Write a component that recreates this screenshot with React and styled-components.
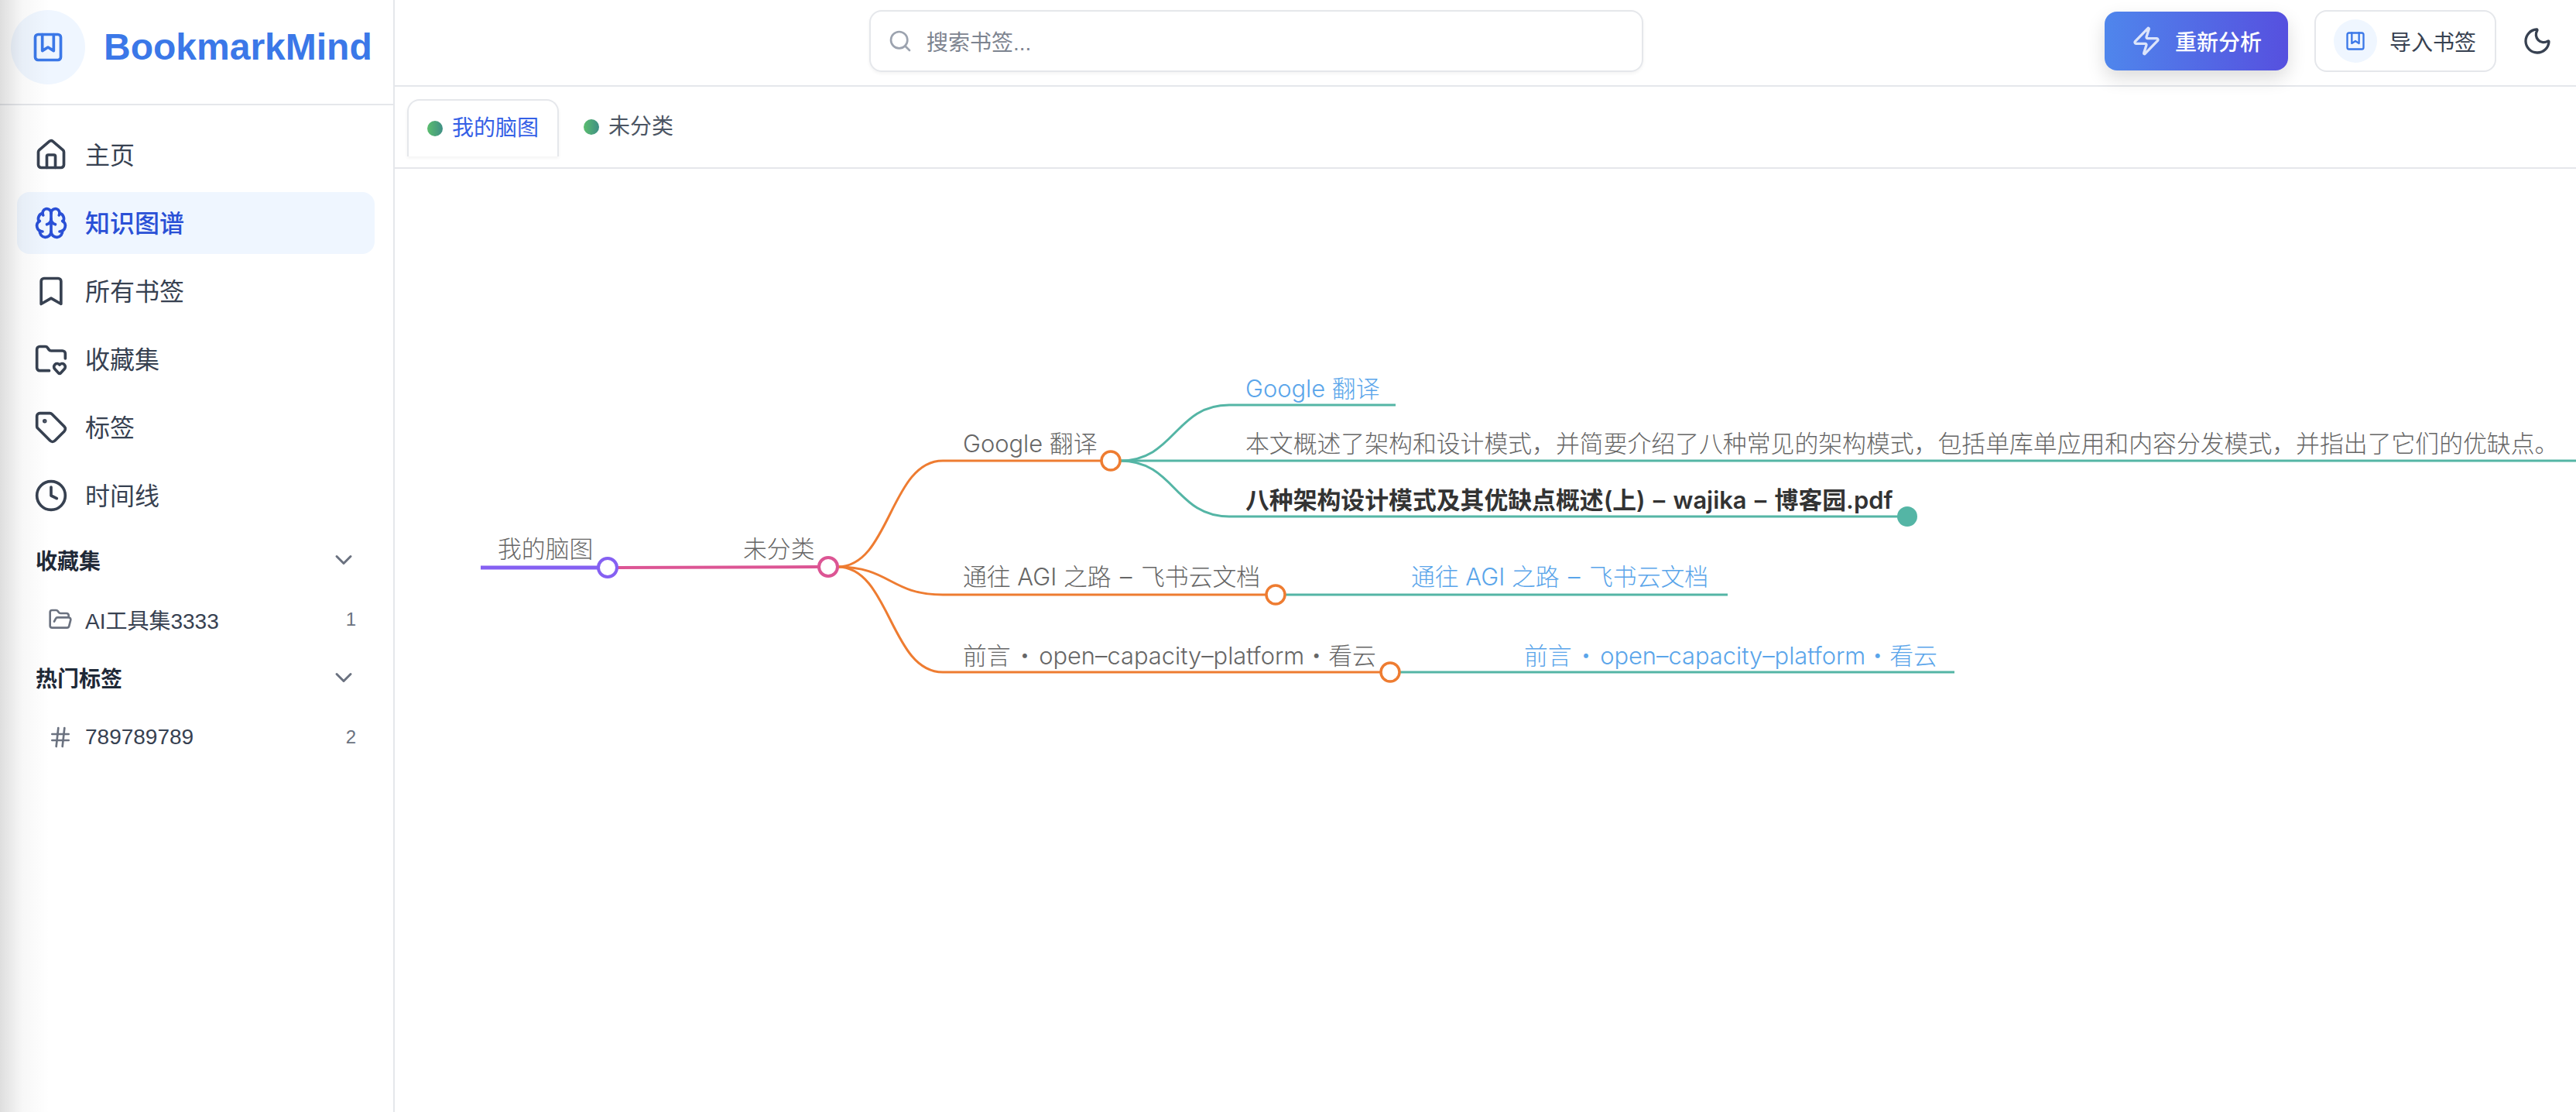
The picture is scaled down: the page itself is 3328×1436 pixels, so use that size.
import React from 'react';
import styled, { createGlobalStyle } from 'styled-components';
import {
  Brain,
  Bookmark,
  ChevronDown,
  Clock,
  FolderHeart,
  FolderOpen,
  Hash,
  House,
  Moon,
  Search,
  Tag,
  Zap,
} from 'lucide-react';

const GlobalStyle = createGlobalStyle`
  html, body {
    margin: 0;
    height: 100%;
    background: #fff;
    overflow: hidden;
  }
  body {
    font-family: "Liberation Sans", "Noto Sans CJK SC", sans-serif;
    color: #374151;
  }
  * {
    box-sizing: border-box;
  }
`;

const LogoGlyph = ({ size }) => (
  <svg width={size} height={size} viewBox="0 0 24 24" fill="none" stroke="currentColor" strokeWidth="2" strokeLinecap="round" strokeLinejoin="round">
    <rect x="3" y="3" width="18" height="18" rx="2" />
    <path d="M8 3v11.5l4-2.5 4 2.5V3" />
  </svg>
);

const navItems = [
  { label: '主页', Icon: House },
  { label: '知识图谱', Icon: Brain, active: true },
  { label: '所有书签', Icon: Bookmark },
  { label: '收藏集', Icon: FolderHeart },
  { label: '标签', Icon: Tag },
  { label: '时间线', Icon: Clock },
];

const App = () => {
  return (
    <Page>
      <GlobalStyle />
      <Sidebar>
        <Brand>
          <BrandBadge>
            <LogoGlyph size={44} />
          </BrandBadge>
          <BrandName>BookmarkMind</BrandName>
        </Brand>
        <Nav>
          {navItems.map(({ label, Icon, active }) => (
            <NavItem key={label} $active={active}>
              <Icon size={44} strokeWidth={2} />
              <NavLabel>{label}</NavLabel>
            </NavItem>
          ))}
        </Nav>
        <Section>
          <SectionHead>
            收藏集
            <ChevronDown size={36} strokeWidth={2} />
          </SectionHead>
          <SectionRow>
            <FolderOpen size={32} strokeWidth={2} />
            <RowLabel>AI工具集3333</RowLabel>
            <RowCount>1</RowCount>
          </SectionRow>
        </Section>
        <Section>
          <SectionHead>
            热门标签
            <ChevronDown size={36} strokeWidth={2} />
          </SectionHead>
          <SectionRow>
            <Hash size={32} strokeWidth={2} />
            <RowLabel>789789789</RowLabel>
            <RowCount>2</RowCount>
          </SectionRow>
        </Section>
      </Sidebar>

      <Main>
        <TopBar>
          <SearchBox>
            <Search size={32} strokeWidth={2} />
            搜索书签...
          </SearchBox>
          <Actions>
            <AnalyzeButton>
              <Zap size={40} strokeWidth={2} />
              重新分析
            </AnalyzeButton>
            <ImportButton>
              <ImportBadge>
                <LogoGlyph size={28} />
              </ImportBadge>
              导入书签
            </ImportButton>
            <ThemeToggle>
              <Moon size={40} strokeWidth={2} />
            </ThemeToggle>
          </Actions>
        </TopBar>

        <TabBar>
          <MapTab $active>
            <TabDot />
            我的脑图
          </MapTab>
          <MapTab>
            <TabDot />
            未分类
          </MapTab>
        </TabBar>

        <Canvas>
          <MindMap />
        </Canvas>
      </Main>
    </Page>
  );
};

const ORANGE = '#ee7c31';
const TEAL = '#54b5a5';

// hair spaces widen the dash and dot to what the reference renders
const DASH = ' \u200A–\u200A ';
const DOT = '\u200A・\u200A';

// coordinates are page pixels, hence the viewBox offset
const MindMap = () => (
  <MapSvg viewBox="510 218 2818 1218" fill="none">
    <path d="M621 733H772" stroke="#8560f2" strokeWidth="5" />
    <path d="M798 733L1057 732" stroke="#dc5594" strokeWidth="4" />

    <g stroke={ORANGE} strokeWidth="3">
      <path d="M1082 732C1150 732 1150 595 1218 595H1423" />
      <path d="M1082 732C1150 732 1150 768 1218 768H1636" />
      <path d="M1082 732C1150 732 1150 868 1218 868H1784" />
    </g>
    <g stroke={TEAL} strokeWidth="3">
      <path d="M1447 595C1518 595 1518 523 1588 523H1803" />
      <path d="M1447 595H3328" />
      <path d="M1447 595C1518 595 1518 667 1588 667H2452" />
      <path d="M1660 768H2232" />
      <path d="M1808 868H2525" />
    </g>

    <circle cx="785" cy="733" r="12" fill="#fff" stroke="#8560f2" strokeWidth="4" />
    <circle cx="1070" cy="732" r="12" fill="#fff" stroke="#dc5594" strokeWidth="4" />
    <circle cx="1435" cy="595" r="12" fill="#fff" stroke={ORANGE} strokeWidth="3.5" />
    <circle cx="1648" cy="768" r="12" fill="#fff" stroke={ORANGE} strokeWidth="3.5" />
    <circle cx="1796" cy="868" r="12" fill="#fff" stroke={ORANGE} strokeWidth="3.5" />
    <circle cx="2464" cy="667" r="13" fill={TEAL} />

    <NodeText x="643" y="720">我的脑图</NodeText>
    <NodeText x="960" y="720">未分类</NodeText>
    <NodeText x="1244" y="584">Google 翻译</NodeText>
    <NodeText x="1244" y="756">{`通往 AGI 之路${DASH}飞书云文档`}</NodeText>
    <NodeText x="1244" y="858">{`前言${DOT}open–capacity–platform・看云`}</NodeText>
    <NodeText $tone="link" x="1609" y="513">Google 翻译</NodeText>
    <NodeText x="1609" y="584">本文概述了架构和设计模式，并简要介绍了八种常见的架构模式，包括单库单应用和内容分发模式，并指出了它们的优缺点。</NodeText>
    <NodeText $tone="strong" x="1609" y="657">{`八种架构设计模式及其优缺点概述(上)${DASH}wajika${DASH}博客园.pdf`}</NodeText>
    <NodeText $tone="link" x="1823" y="756">{`通往 AGI 之路${DASH}飞书云文档`}</NodeText>
    <NodeText $tone="link" x="1969" y="858">{`前言${DOT}open–capacity–platform・看云`}</NodeText>
  </MapSvg>
);

const Page = styled.div`
  display: flex;
  width: 3328px;
  height: 1436px;
  overflow: hidden;
  background: #fff;
`;

const Sidebar = styled.aside`
  position: relative;
  flex: 0 0 510px;
  border-right: 2px solid #e5e7eb;

  /* soft window shadow along the left edge */
  &::after {
    content: '';
    position: absolute;
    inset: 0 auto 0 0;
    width: 64px;
    background: linear-gradient(to right, rgba(0, 0, 0, 0.13), rgba(0, 0, 0, 0.03) 45%, rgba(0, 0, 0, 0));
    pointer-events: none;
  }
`;

const Brand = styled.div`
  display: flex;
  align-items: center;
  gap: 24px;
  height: 136px;
  padding: 0 14px 12px;
  border-bottom: 2px solid #e5e7eb;
`;

const BrandBadge = styled.div`
  display: flex;
  align-items: center;
  justify-content: center;
  width: 96px;
  height: 96px;
  border-radius: 50%;
  background: #eff6ff;
  color: #3b78e8;
`;

const BrandName = styled.div`
  font-size: 48px;
  font-weight: 700;
  line-height: 56px;
  color: #3b78e8;
`;

const Nav = styled.nav`
  display: flex;
  flex-direction: column;
  gap: 8px;
  padding: 24px 24px 0 22px;
`;

const NavItem = styled.a`
  display: flex;
  align-items: center;
  gap: 22px;
  height: 80px;
  padding: 0 22px;
  border-radius: 16px;
  font-size: 32px;
  font-weight: ${(p) => (p.$active ? 500 : 400)};
  color: ${(p) => (p.$active ? '#2a50d6' : '#374151')};
  background: ${(p) => (p.$active ? '#eff6ff' : 'transparent')};
`;

const NavLabel = styled.span`
  padding-bottom: 4px;
`;

const Section = styled.section`
  margin-top: 23px;
  padding: 0 46px;
`;

const SectionHead = styled.div`
  display: flex;
  align-items: center;
  justify-content: space-between;
  height: 40px;
  margin-bottom: 25px;
  font-size: 28px;
  font-weight: 700;
  color: #1f2937;

  svg {
    color: #6b7280;
  }
`;

const SectionRow = styled.div`
  display: flex;
  align-items: center;
  height: 64px;
  padding-left: 16px;
  gap: 16px;

  svg {
    color: #6b7280;
  }
`;

const RowLabel = styled.span`
  flex: 1;
  font-size: 28px;
  color: #374151;
`;

const RowCount = styled.span`
  margin-right: 2px;
  font-size: 24px;
  color: #6b7280;
`;

const Main = styled.main`
  display: flex;
  flex-direction: column;
  flex: 1;
  min-width: 0;
`;

const TopBar = styled.header`
  position: relative;
  z-index: 1;
  display: flex;
  align-items: center;
  flex: 0 0 112px;
  padding: 0 30px 4px 613px;
  border-bottom: 2px solid #e5e7eb;
`;

const SearchBox = styled.div`
  display: flex;
  align-items: center;
  gap: 18px;
  width: 1000px;
  height: 80px;
  padding-left: 22px;
  border: 2px solid #e5e7eb;
  border-radius: 16px;
  box-shadow: 0 2px 4px rgba(0, 0, 0, 0.05);
  font-size: 28px;
  color: #7d8490;

  svg {
    color: #9ca3af;
  }
`;

const Actions = styled.div`
  display: flex;
  align-items: center;
  margin-left: auto;
`;

const AnalyzeButton = styled.button`
  display: flex;
  align-items: center;
  gap: 17px;
  height: 76px;
  padding: 0 34px;
  border: 0;
  border-radius: 16px;
  background: linear-gradient(to right, #4f86ec, #5650df);
  box-shadow: 0 10px 24px rgba(0, 0, 0, 0.14);
  font: inherit;
  font-size: 28px;
  font-weight: 500;
  color: #fff;

  svg {
    color: rgba(255, 255, 255, 0.8);
  }
`;

const ImportButton = styled.button`
  display: flex;
  align-items: center;
  gap: 16px;
  height: 80px;
  margin-left: 34px;
  padding: 0 24px 0 23px;
  border: 2px solid #e5e7eb;
  border-radius: 16px;
  background: #fff;
  font: inherit;
  font-size: 28px;
  color: #374151;
`;

const ImportBadge = styled.span`
  display: flex;
  align-items: center;
  justify-content: center;
  width: 56px;
  height: 56px;
  border-radius: 50%;
  background: #eff6ff;
  color: #3b78e8;
`;

const ThemeToggle = styled.button`
  display: flex;
  margin-left: 33px;
  padding: 0;
  border: 0;
  background: none;
  color: #374151;
`;

const TabBar = styled.div`
  display: flex;
  align-items: flex-start;
  gap: 8px;
  flex: 0 0 106px;
  padding: 16px 0 0 16px;
  border-bottom: 2px solid #e5e7eb;
`;

const MapTab = styled.div`
  display: flex;
  align-items: center;
  gap: 12px;
  height: ${(p) => (p.$active ? '74px' : '72px')};
  padding: 16px 24px;
  font-size: 28px;
  line-height: 40px;
  color: ${(p) => (p.$active ? '#3560e6' : '#4b5563')};
  border: ${(p) => (p.$active ? '2px solid #e5e7eb' : '0')};
  border-bottom: 0;
  border-radius: 16px 16px 0 0;
  box-shadow: ${(p) => (p.$active ? '0 2px 4px rgba(0, 0, 0, 0.05)' : 'none')};
`;

const TabDot = styled.span`
  flex: none;
  width: 20px;
  height: 20px;
  border-radius: 50%;
  background: linear-gradient(to right, #5bbd6e, #3f8f85);
`;

const Canvas = styled.div`
  flex: 1;
  min-height: 0;
`;

const MapSvg = styled.svg`
  display: block;
  width: 100%;
  height: 100%;
`;

const toneColor = { link: '#5aa5ea', strong: '#333333', plain: '#666666' };

const NodeText = styled.text`
  font-family: Inter, "Noto Sans CJK SC", sans-serif;
  font-size: 30.85px;
  font-weight: ${(p) => (p.$tone === 'strong' ? 600 : 300)};
  fill: ${(p) => toneColor[p.$tone || 'plain']};
`;

export default App;
